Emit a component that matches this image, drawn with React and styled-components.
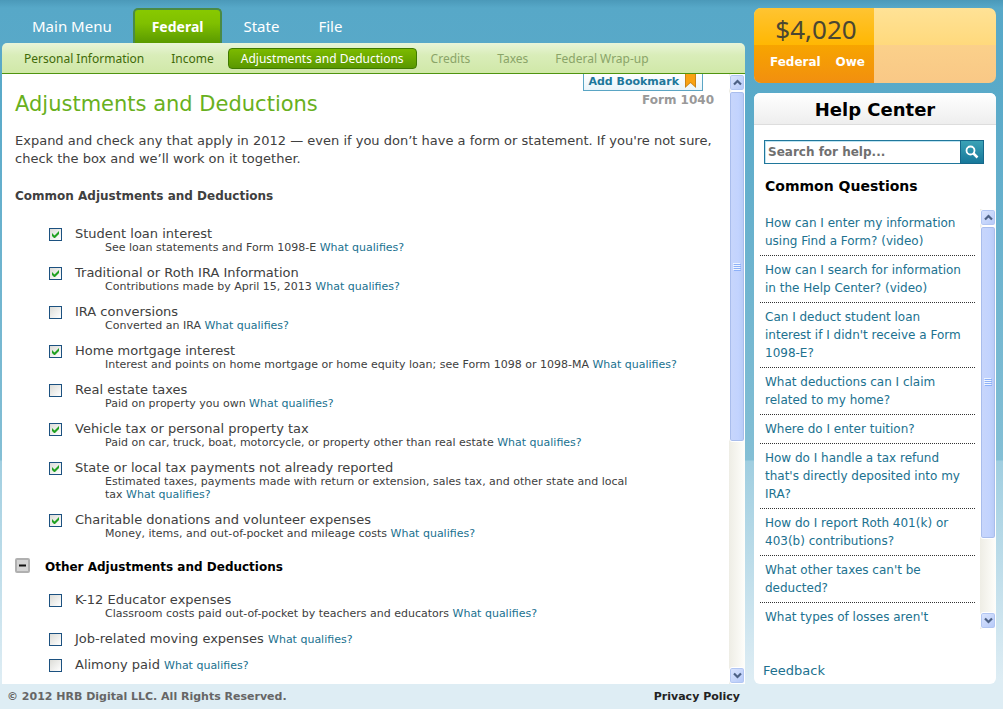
import { useState } from "react";
import styled, { createGlobalStyle, css } from "styled-components";

const GlobalStyle = createGlobalStyle`
  * {
    box-sizing: border-box;
  }

  body {
    margin: 0;
    color: #404040;
    font-family: "DejaVu Sans", Verdana, sans-serif;
    font-size: 13px;
    line-height: 18px;
  }

  h1, h2, h3, p, ul {
    margin: 0;
    padding: 0;
  }

  ul {
    list-style: none;
  }

  button {
    padding: 0;
    border: 0;
    font-family: inherit;
    cursor: pointer;
  }
`;

const Page = styled.div`
  display: flex;
  flex-direction: column;
  height: 100vh;
  background: linear-gradient(
    #4b99b9 0,
    #57a8c8 8px,
    #5aaac9 100px,
    #84bfd5 460px,
    #a0cee0 461px,
    #deedf4 680px
  );
`;

const Columns = styled.div`
  display: flex;
  flex: 1;
  gap: 9px;
  min-height: 0;
  padding: 8px 7px 0 2px;
`;

const Main = styled.main`
  display: flex;
  flex: 1;
  flex-direction: column;
  min-width: 0;
`;

const Tabs = styled.nav`
  display: flex;
  gap: 3px;
  padding-left: 12px;
`;

const Tab = styled.a`
  height: 35px;
  padding: 0 16px;
  border: 2px solid transparent;
  border-bottom: 0;
  border-radius: 5px 5px 0 0;
  color: #fff;
  font: 15px/33px "Noto Sans", sans-serif;
  text-decoration: none;

  ${({ $active }) =>
    $active &&
    css`
      padding: 0 17px;
      border-color: #4a8a45;
      background: linear-gradient(#88c900, #80c000 40%, #5a9a00);
      font-weight: 700;
      font-size: 14px;
    `}
`;

const SubTabs = styled.nav`
  display: flex;
  gap: 1px;
  align-items: center;
  height: 31px;
  padding-left: 9px;
  border-bottom: 1px solid #4f9410;
  border-radius: 5px 5px 0 0;
  background: linear-gradient(#e9f5d9, #d9edb9 40%, #d0e8a8);
`;

const SubTab = styled.a`
  height: 21px;
  padding: 0 12px;
  border: 1px solid transparent;
  border-radius: 4px;
  color: ${({ $disabled }) => ($disabled ? "#8aa468" : "#3f6a08")};
  font: 12px/19px "Noto Sans", sans-serif;
  text-decoration: none;

  ${({ $active }) =>
    $active &&
    css`
      border-color: #3f7a00;
      background: linear-gradient(#7cba00, #5a9800);
      color: #fff;
    `}
`;

const Panel = styled.div`
  display: flex;
  flex: 1;
  min-height: 0;
  background: #fff;
`;

const Content = styled.div`
  flex: 1;
  min-width: 0;
  overflow: hidden;
  padding: 0 15px 0 13px;
`;

const Tools = styled.div`
  display: flex;
  flex-direction: column;
  float: right;
  align-items: flex-end;
  color: #999;
  font-weight: 700;
  font-size: 12px;
`;

const Bookmark = styled.button`
  display: flex;
  gap: 6px;
  height: 17px;
  margin-right: 11px;
  padding: 0 6px 0 4px;
  border: 1px solid #5aa5c4;
  border-top: 0;
  background: linear-gradient(#fff, #e9f4fa);
  color: #20779b;
  font-weight: 700;
  font-size: 11px;
  line-height: 16px;
`;

const Title = styled.h1`
  padding-top: 17px;
  color: #68b020;
  font-weight: 400;
  font-size: 21px;
  line-height: 27px;
`;

const Intro = styled.p`
  padding-top: 14px;
`;

const SectionTitle = styled.h2`
  padding: 19px 0 21px;
  font-size: 12px;
  line-height: 18px;
`;

const OtherHeader = styled.div`
  display: flex;
  gap: 15px;
  align-items: flex-start;
  padding: 7px 0 16px;
  color: #000;

  h2 {
    font-size: 12px;
    line-height: 18px;
  }
`;

const Toggle = styled.button`
  display: flex;
  align-items: center;
  justify-content: center;
  width: 15px;
  height: 15px;
  border: 2px solid #b0b0b0;
  border-radius: 2px;
  background: #d4d4d4;
`;

const Items = styled.ul`
  padding-left: 34px;
`;

const Item = styled.li`
  display: grid;
  grid-template-columns: 13px 1fr;
  column-gap: 13px;
  padding-bottom: 11px;
  line-height: 15px;
`;

const CheckWrap = styled.span`
  display: grid;
  height: 13px;
  margin-top: 2px;

  input,
  svg {
    grid-area: 1 / 1;
  }

  svg {
    visibility: hidden;
    pointer-events: none;
  }

  input:checked + svg {
    visibility: visible;
  }
`;

const Checkbox = styled.input`
  width: 13px;
  height: 13px;
  margin: 0;
  border: 1px solid #1c5180;
  background: linear-gradient(135deg, #dcdcd7, #fff);
  appearance: none;
`;

const Description = styled.div`
  padding-left: 30px;
  font-size: 11px;
  line-height: 13px;
`;

const Link = styled.a`
  color: #20718f;
  text-decoration: none;
`;

const Qualifies = styled(Link)`
  font-size: 11px;
  line-height: 13px;
  white-space: nowrap;
`;

const Sidebar = styled.aside`
  display: flex;
  flex-direction: column;
  gap: 10px;
  width: 242px;
`;

const Refund = styled.section`
  display: flex;
  height: 75px;
  overflow: hidden;
  border-radius: 7px;
  background: linear-gradient(#ffe296, #ffd97c 50%, #fbd08a 50%, #f9c886);
`;

const RefundBox = styled.div`
  width: 120px;
  background: linear-gradient(#ffc432, #ffb702 50%, #f7a400 50%, #f28f0f);
  color: #fff;
  font-weight: 700;
  font-size: 12px;
`;

const Amount = styled.div`
  padding: 3px 0 0 4px;
  color: #4a4632;
  font: 26px/36px "Noto Sans", sans-serif;
  text-align: center;
`;

const RefundLabels = styled.div`
  display: flex;
  justify-content: space-between;
  padding: 6px 9px 0 16px;
`;

const Help = styled.section`
  display: flex;
  flex: 1;
  flex-direction: column;
  min-height: 0;
  overflow: hidden;
  border-radius: 6px;
  background: #fff;
`;

const HelpTitle = styled.h2`
  height: 32px;
  border-bottom: 1px solid #ddd;
  background: linear-gradient(#fff, #eee);
  color: #000;
  font-size: 18px;
  line-height: 33px;
  text-align: center;
`;

const Search = styled.form`
  display: flex;
  height: 24px;
  margin: 15px 12px 12px 10px;
`;

const SearchInput = styled.input`
  flex: 1;
  min-width: 0;
  padding: 0 3px;
  border: 1px solid #20779b;
  border-right: 0;
  outline: 0;
  box-shadow: inset 1px 1px #bfe4f2;
  color: #666;
  font: 700 12px "DejaVu Sans", Verdana, sans-serif;

  &::placeholder {
    color: #707070;
    opacity: 1;
  }
`;

const SearchButton = styled.button`
  display: flex;
  align-items: center;
  justify-content: center;
  width: 24px;
  border: 1px solid #16688a;
  background: linear-gradient(#3ba2b6, #17789a);
`;

const QuestionsTitle = styled.h3`
  padding: 0 11px 13px;
  color: #000;
  font-size: 14px;
  line-height: 20px;
`;

const QuestionPanel = styled.div`
  display: flex;
  flex: 1;
  gap: 5px;
  min-height: 0;
  padding-left: 6px;
`;

const Questions = styled.ul`
  flex: 1;
  overflow: hidden;
  font-size: 12px;
`;

const Question = styled.li`
  padding: 5px 5px;
  border-bottom: 1px dotted #333;
`;

const Feedback = styled.div`
  padding: 33px 9px 4px;
`;

const Track = styled.div`
  display: flex;
  flex-direction: column;
  flex-shrink: 0;
  width: 16px;
  background: linear-gradient(90deg, #eeede5, #fefefb);
`;

const ArrowButton = styled.button`
  display: flex;
  flex-shrink: 0;
  align-items: center;
  justify-content: center;
  height: 17px;
  border: 1px solid #fff;
  border-radius: 3px;
  background: linear-gradient(135deg, #dce6fe, #b4c8f8);
  box-shadow: inset 0 0 0 1px #b2c6f2;
`;

const ThumbArea = styled.div`
  flex: 1;
`;

const Thumb = styled.div`
  display: flex;
  align-items: center;
  justify-content: center;
  border: 1px solid #fff;
  border-radius: 3px;
  background: linear-gradient(90deg, #c8d6fb, #c2d3fe 60%, #b7caf5);
  box-shadow: inset 0 0 0 1px #a9bdec;
`;

const Footer = styled.footer`
  display: flex;
  justify-content: space-between;
  height: 25px;
  padding: 0 263px 0 7px;
  background: #deedf4;
  color: #666;
  font-weight: 700;
  font-size: 11px;
  line-height: 25px;

  a {
    color: #222;
    text-decoration: none;
  }
`;

const tabs = ["Main Menu", "Federal", "State", "File"];

const subTabs = [
  { name: "Personal Information" },
  { name: "Income" },
  { name: "Adjustments and Deductions", active: true },
  { name: "Credits", disabled: true },
  { name: "Taxes", disabled: true },
  { name: "Federal Wrap-up", disabled: true },
];

const commonItems = [
  {
    id: "student-loan",
    label: "Student loan interest",
    text: "See loan statements and Form 1098-E",
    checked: true,
  },
  {
    id: "ira-info",
    label: "Traditional or Roth IRA Information",
    text: "Contributions made by April 15, 2013",
    checked: true,
  },
  { id: "ira-conversions", label: "IRA conversions", text: "Converted an IRA" },
  {
    id: "mortgage",
    label: "Home mortgage interest",
    text: "Interest and points on home mortgage or home equity loan; see Form 1098 or 1098-MA",
    checked: true,
  },
  {
    id: "real-estate",
    label: "Real estate taxes",
    text: "Paid on property you own",
  },
  {
    id: "vehicle",
    label: "Vehicle tax or personal property tax",
    text: "Paid on car, truck, boat, motorcycle, or property other than real estate",
    checked: true,
  },
  {
    id: "state-local",
    label: "State or local tax payments not already reported",
    text: "Estimated taxes, payments made with return or extension, sales tax, and other state and local tax",
    checked: true,
  },
  {
    id: "charity",
    label: "Charitable donations and volunteer expenses",
    text: "Money, items, and out-of-pocket and mileage costs",
    checked: true,
  },
];

const otherItems = [
  {
    id: "educator",
    label: "K-12 Educator expenses",
    text: "Classroom costs paid out-of-pocket by teachers and educators",
  },
  { id: "moving", label: "Job-related moving expenses" },
  { id: "alimony", label: "Alimony paid" },
];

const questions = [
  "How can I enter my information using Find a Form? (video)",
  "How can I search for information in the Help Center? (video)",
  "Can I deduct student loan interest if I didn't receive a Form 1098-E?",
  "What deductions can I claim related to my home?",
  "Where do I enter tuition?",
  "How do I handle a tax refund that's directly deposited into my IRA?",
  "How do I report Roth 401(k) or 403(b) contributions?",
  "What other taxes can't be deducted?",
  "What types of losses aren't",
];

const Arrow = ({ down }) => (
  <svg width="9" height="7" viewBox="0 0 9 7" fill="none">
    <path
      d={down ? "M1 1.5l3.5 3.5L8 1.5" : "M1 5.5L4.5 2 8 5.5"}
      stroke="#4d6185"
      strokeWidth="2.2"
    />
  </svg>
);

const Scrollbar = ({ size }) => (
  <Track>
    <ArrowButton type="button" aria-label="Scroll up">
      <Arrow />
    </ArrowButton>
    <ThumbArea>
      <Thumb style={{ height: `${size}%` }}>
        <svg width="8" height="8" viewBox="0 0 8 8">
          <path d="M0 .5h7M0 2.5h7M0 4.5h7M0 6.5h7" stroke="#eef4fe" />
          <path d="M1 1.5h7M1 3.5h7M1 5.5h7M1 7.5h7" stroke="#8cb0f8" />
        </svg>
      </Thumb>
    </ThumbArea>
    <ArrowButton type="button" aria-label="Scroll down">
      <Arrow down />
    </ArrowButton>
  </Track>
);

const ItemList = ({ items, checked, onToggle }) => (
  <Items>
    {items.map(({ id, label, text }) => (
      <Item key={id}>
        <CheckWrap>
          <Checkbox
            type="checkbox"
            id={id}
            checked={!!checked[id]}
            onChange={() => onToggle(id)}
          />
          <svg width="13" height="13" viewBox="0 0 13 13">
            <path d="M3 5v3l2 2h1l4-4V3L5.5 7.5z" fill="#21a121" />
          </svg>
        </CheckWrap>
        <div>
          <label htmlFor={id}>{label}</label>
          {!text && <> <Qualifies href="#">What qualifies?</Qualifies></>}
          {text && (
            <Description>
              {text}&nbsp;<Qualifies href="#">What qualifies?</Qualifies>
            </Description>
          )}
        </div>
      </Item>
    ))}
  </Items>
);

const App = () => {
  const [open, setOpen] = useState(true);
  const [checked, setChecked] = useState(
    Object.fromEntries(commonItems.map((item) => [item.id, item.checked]))
  );

  const handleToggle = (id) => {
    setChecked({ ...checked, [id]: !checked[id] });
  };

  return (
    <>
      <GlobalStyle />
      <Page>
        <Columns>
          <Main>
            <Tabs>
              {tabs.map((name) => (
                <Tab key={name} href="#" $active={name === "Federal"}>
                  {name}
                </Tab>
              ))}
            </Tabs>
            <SubTabs>
              {subTabs.map(({ name, active, disabled }) => (
                <SubTab
                  key={name}
                  href="#"
                  $active={active}
                  $disabled={disabled}
                >
                  {name}
                </SubTab>
              ))}
            </SubTabs>
            <Panel>
              <Content>
                <Tools>
                  <Bookmark type="button">
                    Add Bookmark
                    <svg width="11" height="14" viewBox="0 0 11 14">
                      <path d="M0 0h11v14L5.5 9 0 14z" fill="#c98316" />
                      <path d="M1 0h9v12L5.5 8 1 12z" fill="#f9a212" />
                    </svg>
                  </Bookmark>
                  <span>Form 1040</span>
                </Tools>
                <Title>Adjustments and Deductions</Title>
                <Intro>
                  Expand and check any that apply in 2012 — even if you don’t
                  have a form or statement. If you're not sure, check the box
                  and we’ll work on it together.
                </Intro>
                <SectionTitle>Common Adjustments and Deductions</SectionTitle>
                <ItemList
                  items={commonItems}
                  checked={checked}
                  onToggle={handleToggle}
                />
                <OtherHeader>
                  <Toggle
                    type="button"
                    aria-label="Toggle other adjustments"
                    onClick={() => setOpen(!open)}
                  >
                    <svg width="7" height="7" viewBox="0 0 7 7">
                      <path
                        d={open ? "M0 3.5h7" : "M0 3.5h7M3.5 0v7"}
                        stroke="#111"
                        strokeWidth="2"
                      />
                    </svg>
                  </Toggle>
                  <h2>Other Adjustments and Deductions</h2>
                </OtherHeader>
                {open && (
                  <ItemList
                    items={otherItems}
                    checked={checked}
                    onToggle={handleToggle}
                  />
                )}
              </Content>
              <Scrollbar size={61} />
            </Panel>
          </Main>
          <Sidebar>
            <Refund>
              <RefundBox>
                <Amount>$4,020</Amount>
                <RefundLabels>
                  <span>Federal</span>
                  <span>Owe</span>
                </RefundLabels>
              </RefundBox>
            </Refund>
            <Help>
              <HelpTitle>Help Center</HelpTitle>
              <Search onSubmit={(e) => e.preventDefault()}>
                <SearchInput
                  type="text"
                  aria-label="Search for help"
                  placeholder="Search for help..."
                />
                <SearchButton type="submit" aria-label="Search">
                  <svg
                    width="14"
                    height="14"
                    viewBox="0 0 14 14"
                    fill="none"
                    stroke="#fff"
                  >
                    <circle cx="5.5" cy="5.5" r="4" strokeWidth="1.8" />
                    <path d="M8.5 8.5l4 4" strokeWidth="2.5" />
                  </svg>
                </SearchButton>
              </Search>
              <QuestionsTitle>Common Questions</QuestionsTitle>
              <QuestionPanel>
                <Questions>
                  {questions.map((question) => (
                    <Question key={question}>
                      <Link href="#">{question}</Link>
                    </Question>
                  ))}
                </Questions>
                <Scrollbar size={81} />
              </QuestionPanel>
              <Feedback>
                <Link href="#">Feedback</Link>
              </Feedback>
            </Help>
          </Sidebar>
        </Columns>
        <Footer>
          <span>© 2012 HRB Digital LLC. All Rights Reserved.</span>
          <a href="#">Privacy Policy</a>
        </Footer>
      </Page>
    </>
  );
};

export default App;
